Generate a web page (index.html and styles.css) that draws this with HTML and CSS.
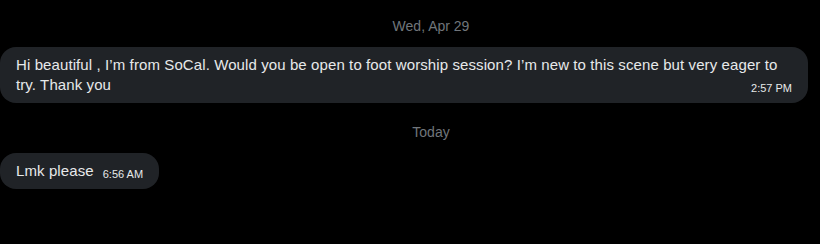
FILE: index.html
```html
<!DOCTYPE html>
<html lang="en">
<head>
  <meta charset="UTF-8" />
  <title>Messages</title>
  <link rel="stylesheet" href="styles.css">
</head>
<body>
  <div class="thread">
    <div class="day first">Wed, Apr 29</div>
    <div class="row">
      <div class="bubble">Hi beautiful , I’m from SoCal. Would you be open to foot worship session? I’m new to this scene but very eager to try. Thank you<span class="time">2:57 PM</span></div>
    </div>

    <div class="day">Today</div>
    <div class="row">
      <div class="bubble">Lmk please<span class="time">6:56 AM</span></div>
    </div>
  </div>
</body>
</html>
```

FILE: styles.css
```css
body {
  margin: 0;
  background: #000;
  font-family: "Liberation Sans", Arial, sans-serif;
  overflow: hidden;
}

.thread {
  padding-right: 12px;
}

.day {
  padding: 21px 0 13px 54px;
  text-align: center;
  color: #71767b;
  font-size: 14px;
  line-height: 16px;
}

.day.first {
  padding-top: 18px;
}

.bubble {
  display: inline-block;
  max-width: 100%;
  box-sizing: border-box;
  background: #202327;
  color: #e7e9ea;
  font-size: 15px;
  line-height: 20px;
  letter-spacing: 0.1px;
  padding: 8px 16px;
  border-radius: 16px;
}

.time {
  float: right;
  margin: 6px 0 0 9px;
  font-size: 11px;
  line-height: 14px;
  letter-spacing: 0;
}
```
